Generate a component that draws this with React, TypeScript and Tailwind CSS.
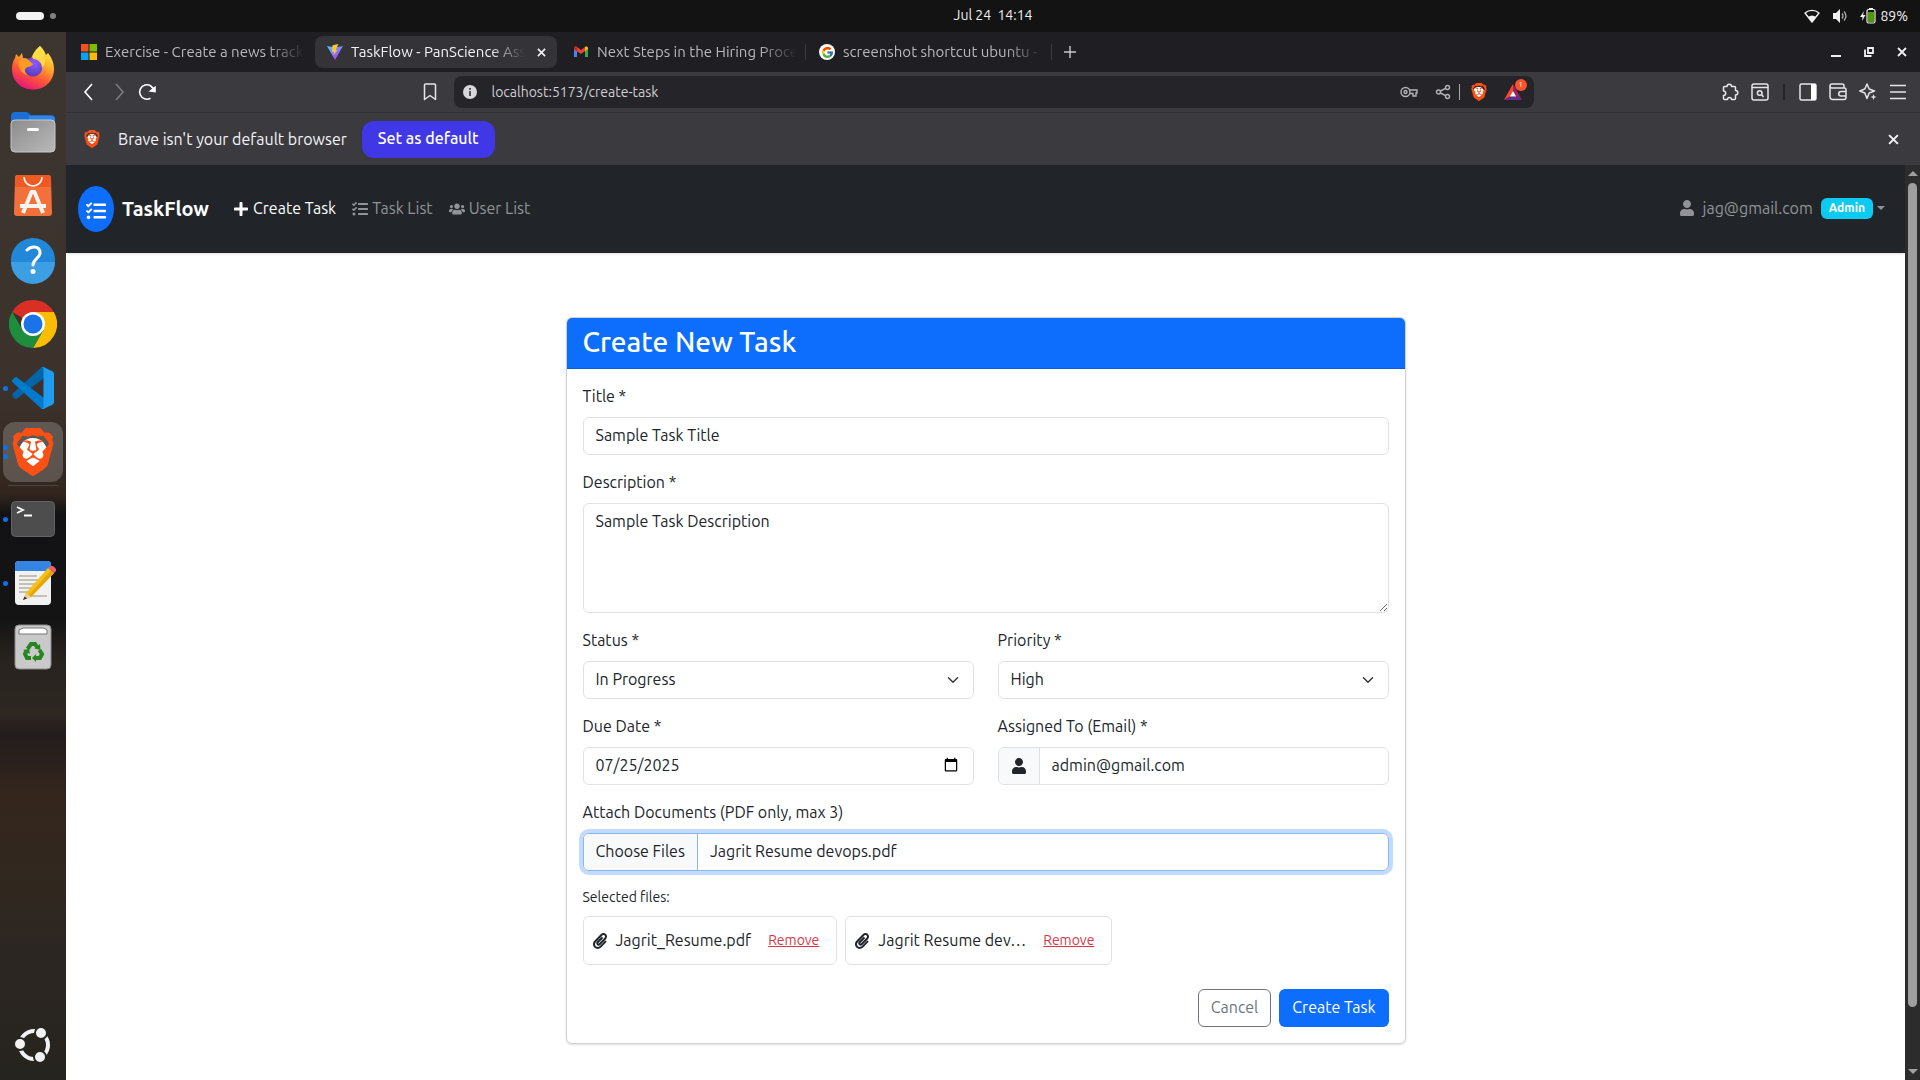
import React from "react";
import { FaPaperclip, FaPlus, FaTasks, FaUser, FaUsers } from "react-icons/fa";
import { FcGoogle } from "react-icons/fc";
import { SiBrave } from "react-icons/si";

/* ---------- Dock icons ---------- */

function FirefoxIcon() {
  return (
    <svg viewBox="0 0 48 48" className="size-12">
      <defs>
        <linearGradient id="fx-body" x1="0.8" y1="0" x2="0.3" y2="1">
          <stop offset="0" stopColor="#fff44f" />
          <stop offset="0.35" stopColor="#ffb22e" />
          <stop offset="0.65" stopColor="#ff5a34" />
          <stop offset="1" stopColor="#e8127c" />
        </linearGradient>
        <radialGradient id="fx-globe" cx="0.6" cy="0.3" r="0.8">
          <stop offset="0" stopColor="#9059ff" />
          <stop offset="1" stopColor="#4a3bb5" />
        </radialGradient>
      </defs>
      <path
        d="M31 2c3 3 5 6 6 9l2-2c4 5 6 10 6 16 0 12-9 20.500-21 20.500S3 37 3 25c0-5 1-8 3-11l1-4 3 3 3-4 1 5c4 0 6 1 8 2 0-4 5-10 9-14z"
        fill="url(#fx-body)"
      />
      <circle cx="24" cy="23" r="9.500" fill="url(#fx-globe)" />
      <path d="M9 18c4-3 9-3 12-1 1 2 3 2 3 3-1 3-5 2-7 4-2 2-1 5 2 7-7-1-9-7-10-13z" fill="#ff9a22" />
      <path d="M31 2c-5 4-8 8-7 13 5 0 9 4 9 9 3-3 4-7 2-12 1-4-1-7-4-10z" fill="#ffe14a" opacity="0.85" />
    </svg>
  );
}

function FilesIcon() {
  return (
    <svg viewBox="0 0 48 48" className="size-12">
      <defs>
        <linearGradient id="files" x1="0" y1="0" x2="1" y2="1">
          <stop offset="0" stopColor="#8c8c8c" />
          <stop offset="1" stopColor="#b9b9b9" />
        </linearGradient>
      </defs>
      <path d="M2 8a4 4 0 0 1 4-4h12l4 3h20a4 4 0 0 1 4 4v14H2z" fill="#1a6fd4" />
      <path d="M20 8h22a4 4 0 0 1 4 4v8H20z" fill="#3086e8" />
      <rect x="2" y="12" width="44" height="32" rx="4" fill="url(#files)" stroke="#c8c8c8" />
      <rect x="18" y="20" width="12" height="3" rx="1.500" fill="#fff" />
    </svg>
  );
}

function AppCenterIcon() {
  return (
    <svg viewBox="0 0 48 48" className="size-12">
      <path d="M9 3h30a3 3 0 0 1 3 3l1 35a3 3 0 0 1-3 3H8a3 3 0 0 1-3-3L6 6a3 3 0 0 1 3-3z" fill="#f4703a" />
      <path d="M9 3h30a3 3 0 0 1 3 3v9H6V6a3 3 0 0 1 3-3z" fill="#ee5a22" />
      <path d="M15 5c0 5 4 9 9 9s9-4 9-9" fill="none" stroke="#fff" strokeWidth="1.600" />
      <path d="M14 41 22.500 20h3L34 41M11 34h26" fill="none" stroke="#fff3ee" strokeWidth="4" strokeLinejoin="round" />
    </svg>
  );
}

function HelpIcon() {
  return (
    <svg viewBox="0 0 48 48" className="size-12">
      <circle cx="24" cy="24" r="22" fill="#2187d8" />
      <path d="M2 26a22 22 0 0 0 44 0z" fill="#3d9fe3" />
      <path
        d="M18 14c2-2 4-3 7-3 4 0 6 2.500 6 6 0 5-7 6-7 12"
        fill="none"
        stroke="#fff"
        strokeWidth="3"
        strokeLinecap="round"
      />
      <circle cx="24" cy="35.500" r="2.500" fill="#fff" />
    </svg>
  );
}

function ChromeIcon() {
  return (
    <svg viewBox="0 0 48 48" className="size-12">
      <path d="M24 24 3.200 12A24 24 0 0 1 44.800 12z" fill="#d93025" />
      <path d="M24 12h20.800A24 24 0 0 1 24 48l10.400-18z" fill="#fbbc04" />
      <path d="M13.600 30 3.200 12A24 24 0 0 0 24 48l10.400-18z" fill="#1e8e3e" />
      <circle cx="24" cy="24" r="12" fill="#fff" />
      <circle cx="24" cy="24" r="9.500" fill="#1a73e8" />
    </svg>
  );
}

function VsCodeIcon() {
  return (
    <svg viewBox="0 0 100 100" className="size-[42px]">
      <path
        fill="#0065A9"
        d="M96.461 10.796 75.857.876a6.230 6.230 0 0 0-7.107 1.207L1.299 63.583a4.167 4.167 0 0 0 .004 6.162l5.510 5.009a4.167 4.167 0 0 0 5.321.236l81.227-61.620c2.725-2.067 6.639-.124 6.639 3.297v-.240a6.250 6.250 0 0 0-3.539-5.631z"
      />
      <path
        fill="#007ACC"
        d="m96.461 89.204-20.604 9.920a6.230 6.230 0 0 1-7.107-1.207l-67.451-61.500a4.167 4.167 0 0 1 .004-6.162l5.510-5.009a4.167 4.167 0 0 1 5.321-.236l81.227 61.620c2.725 2.067 6.639.124 6.639-3.297v.240a6.250 6.250 0 0 1-3.539 5.631z"
      />
      <path
        fill="#1F9CF0"
        d="M75.858 99.126a6.230 6.230 0 0 1-7.108-1.210c2.306 2.307 6.250.674 6.250-2.588V4.672c0-3.262-3.944-4.895-6.250-2.589a6.230 6.230 0 0 1 7.108-1.210l20.600 9.908A6.250 6.250 0 0 1 100 16.413v67.174a6.250 6.250 0 0 1-3.541 5.633z"
      />
    </svg>
  );
}

function BraveShield({ className }: { className: string }) {
  return (
    <span className={`relative inline-flex items-center justify-center ${className}`}>
      <span className="absolute inset-[20%] rounded-full bg-white" />
      <SiBrave className="relative size-full text-[#fb5014]" />
    </span>
  );
}

function TerminalIcon() {
  return (
    <svg viewBox="0 0 48 48" className="size-12">
      <rect x="2.500" y="6.500" width="43" height="35" rx="4" fill="#4d4d4d" stroke="#636363" />
      <path d="m8 12 6 3-6 3M15 20.500h8" fill="none" stroke="#fff" strokeWidth="1.800" />
    </svg>
  );
}

function EditorIcon() {
  return (
    <svg viewBox="0 0 48 48" className="size-12">
      <rect x="6" y="2" width="36" height="44" rx="4" fill="#f1f1f1" />
      <path d="M10 2h28a4 4 0 0 1 4 4v6H6V6a4 4 0 0 1 4-4z" fill="#3584e4" />
      <path d="M10 17h18M10 21h22M10 25h16M10 29h14M10 33h10M20 37h18" stroke="#c5c0b5" strokeWidth="1.800" />
      <path d="m17 34 22-25 6 5-23 24-8 3z" fill="#f5c211" />
      <path d="m20 36 22-24.500 3 2.500-23 24z" fill="#e5a50a" />
      <path d="m17 34 5 4-8 3z" fill="#e8c9a0" />
      <path d="m15.500 37.500 2.500 2-4 1.500z" fill="#333" />
      <path d="m39 9 2-2c2-1.500 7 2 6 5l-2 2z" fill="#ed5f6a" />
    </svg>
  );
}

function TrashIcon() {
  return (
    <svg viewBox="0 0 48 48" className="size-12">
      <rect x="6" y="2" width="36" height="44" rx="4" fill="#c9c9c9" stroke="#8a8a8a" />
      <path d="M10 11V7l4-2h21l3 2v4z" fill="#fff" stroke="#777" />
      <g fill="none" stroke="#26851f" strokeWidth="4">
        <path d="m18.500 26 3.500-5h4l2 3" />
        <path d="m30.500 27 2.500 4-2 4h-4" />
        <path d="M22 35h-4l-2-4 1.500-3" />
      </g>
      <path d="m31 21 .500 6-6-1.500zM27 31v8l-4-4zM14 27l6-1 1 5z" fill="#26851f" />
    </svg>
  );
}

function UbuntuIcon() {
  return (
    <svg viewBox="0 0 40 40" className="size-10">
      <circle cx="21" cy="21" r="14" fill="none" stroke="#f2f2f2" strokeWidth="4" />
      <g fill="#f2f2f2" stroke="#282620" strokeWidth="2">
        <circle cx="7" cy="20" r="6" />
        <circle cx="28" cy="9" r="6" />
        <circle cx="27" cy="33" r="6" />
      </g>
    </svg>
  );
}

type DockItem = { name: string; icon: React.ReactNode; dots: number; active?: boolean };

const pinned: DockItem[] = [
  { name: "Firefox", icon: <FirefoxIcon />, dots: 0 },
  { name: "Files", icon: <FilesIcon />, dots: 0 },
  { name: "App Center", icon: <AppCenterIcon />, dots: 0 },
  { name: "Help", icon: <HelpIcon />, dots: 0 },
  { name: "Chrome", icon: <ChromeIcon />, dots: 0 },
  { name: "VS Code", icon: <VsCodeIcon />, dots: 1 },
  { name: "Brave", icon: <BraveShield className="size-12" />, dots: 2, active: true },
];

const running: DockItem[] = [
  { name: "Terminal", icon: <TerminalIcon />, dots: 1 },
  { name: "Text Editor", icon: <EditorIcon />, dots: 1 },
  { name: "Trash", icon: <TrashIcon />, dots: 0 },
];

function DockButton({ item }: { item: DockItem }) {
  return (
    <button
      type="button"
      aria-label={item.name}
      className="relative flex h-16 w-full items-center justify-center"
    >
      {item.active && <span className="absolute inset-x-[3px] inset-y-[2px] rounded-xl bg-white/20" />}
      <span className="absolute left-[3px] flex flex-col gap-1">
        {Array.from({ length: item.dots }, (_, i) => (
          <span key={i} className="size-[5px] rounded-full bg-[#0a73ea]" />
        ))}
      </span>
      <span className="relative flex">{item.icon}</span>
    </button>
  );
}

function Dock() {
  return (
    <nav
      aria-label="Dock"
      className="flex w-[66px] shrink-0 flex-col bg-[linear-gradient(to_bottom,#3c3530_0%,#3c322b_35%,#33261f_44%,#121214_46%,#141415_56%,#28231f_60%,#2e2722_65%,#231d1b_67%,#34261d_73%,#30281f_82%,#2c2623_88%,#26241e_100%)] pt-1 pb-2"
    >
      {pinned.map((item) => (
        <DockButton key={item.name} item={item} />
      ))}
      <div className="mx-2 my-px h-px bg-[#4b4643]" />
      {running.map((item) => (
        <DockButton key={item.name} item={item} />
      ))}
      <button type="button" aria-label="Show applications" className="mt-auto flex h-14 items-center justify-center">
        <UbuntuIcon />
      </button>
    </nav>
  );
}

/* ---------- System bar ---------- */

function SystemBar() {
  return (
    <header className="grid h-8 grid-cols-[62px_1fr_auto_1fr] items-center bg-[#131313] pr-3 pl-4 text-sm text-[#f0f0f0]">
      <button type="button" aria-label="Workspaces" className="flex items-center gap-1.5">
        <span className="h-2 w-7 rounded-full bg-[#f2f2f2]" />
        <span className="size-1.5 rounded-full bg-[#808080]" />
      </button>
      <span />
      <time className="pb-0.5 whitespace-pre">Jul 24  14:14</time>
      <div className="flex items-center justify-end">
        <svg viewBox="0 0 16 16" className="mr-3 size-4">
          <path d="M1 5c4-3.500 10-3.500 14 0l-7 9z" fill="none" stroke="#f0f0f0" strokeWidth="1.400" strokeLinejoin="round" />
          <path d="M4 9c2.500-2 5.500-2 8 0l-4 5.500z" fill="#f0f0f0" />
        </svg>
        <svg viewBox="0 0 16 16" className="mr-3 size-4">
          <path d="M1 5h3l4-4v14l-4-4H1z" fill="#f0f0f0" />
          <path d="M10 5.500q2 2.500 0 5M12 3.500q4 4.500 0 9" fill="none" stroke="#b0b0b0" strokeWidth="1.300" />
        </svg>
        <svg viewBox="0 0 16 16" className="mr-1 size-4">
          <path d="M4 3 0 9h2.500L2 13l3.500-6H3z" fill="#f0f0f0" />
          <rect x="7" y="1.500" width="8" height="13.500" rx="1.500" fill="none" stroke="#f0f0f0" strokeWidth="1.200" />
          <path d="M9 0h4v1.500H9z" fill="#f0f0f0" />
          <rect x="8" y="4" width="6" height="10" fill="#4e9a06" />
        </svg>
        <span>89%</span>
      </div>
    </header>
  );
}

/* ---------- Browser chrome ---------- */

function MicrosoftMark() {
  return (
    <svg viewBox="0 0 16 16" className="size-4 shrink-0">
      <path d="M0 0h7.500v7.500H0z" fill="#f25022" />
      <path d="M8.500 0H16v7.500H8.500z" fill="#7fba00" />
      <path d="M0 8.500h7.500V16H0z" fill="#00a4ef" />
      <path d="M8.500 8.500H16V16H8.500z" fill="#ffb900" />
    </svg>
  );
}

function ViteMark() {
  return (
    <svg viewBox="0 0 16 16" className="size-4 shrink-0">
      <defs>
        <linearGradient id="vite" x1="0" y1="0" x2="0.600" y2="1">
          <stop offset="0" stopColor="#41d1ff" />
          <stop offset="1" stopColor="#bd34fe" />
        </linearGradient>
      </defs>
      <path d="M0 2 8 16 16 2 8 3.500z" fill="url(#vite)" />
      <path d="M11.500 0 5.500 1.200 5 8l2-.400L6.500 11l4-5-2 .300z" fill="#ffc928" />
    </svg>
  );
}

function GmailMark() {
  return (
    <svg viewBox="0 0 16 12" className="w-4 shrink-0">
      <path d="M1 1.500V11h3V4z" fill="#4285f4" />
      <path d="M15 1.500V11h-3V4z" fill="#34a853" />
      <path d="M1 2.500C1 .500 3 0 4 1l4 3 4-3v4L8 8 1 3.500z" fill="#ea4335" />
      <path d="M12 1c1-1 3-.500 3 1.500V3l-3 2.200z" fill="#fbbc04" />
      <path d="M1 2.500C1 .500 3 0 4 1v4.200L1 3z" fill="#c5221f" />
    </svg>
  );
}

function CloseMark({ className }: { className: string }) {
  return (
    <svg viewBox="0 0 10 10" className={className}>
      <path d="m1 1 8 8M9 1 1 9" stroke="currentColor" strokeWidth="1.800" />
    </svg>
  );
}

function Tab({ icon, title, active }: { icon: React.ReactNode; title: string; active?: boolean }) {
  return (
    <div
      className={`flex h-8 w-[242px] items-center rounded-lg pl-3 ${active ? "bg-[#343338] pr-[11px] text-[#f3f3f5]" : "pr-0.5 text-[#b9b8bc]"}`}
    >
      {icon}
      <button
        type="button"
        className={`ml-2 min-w-0 flex-1 overflow-hidden text-left text-[15px] whitespace-nowrap ${active ? "[mask-image:linear-gradient(to_right,#000_80%,transparent)]" : "[mask-image:linear-gradient(to_right,#000_80%,transparent_98%)]"}`}
      >
        {title}
      </button>
      {active && (
        <button type="button" aria-label="Close tab" className="ml-3 flex">
          <CloseMark className="size-[9px]" />
        </button>
      )}
    </div>
  );
}

function TabStrip() {
  return (
    <div className="flex h-10 items-center bg-[#1f1e23] pr-[13px] pl-[3px] text-[#f0f0f2]">
      <Tab icon={<MicrosoftMark />} title="Exercise - Create a news track" />
      <span className="w-1" />
      <Tab icon={<ViteMark />} title="TaskFlow - PanScience Ass" active />
      <span className="w-1" />
      <Tab icon={<GmailMark />} title="Next Steps in the Hiring Proce" />
      <span className="mr-px ml-[2px] h-4 w-px bg-[#3d3c41]" />
      <Tab
        icon={
          <span className="flex size-4 items-center justify-center rounded-full bg-white">
            <FcGoogle className="size-[13px]" />
          </span>
        }
        title="screenshot shortcut ubuntu -"
      />
      <span className="mx-[2px] h-4 w-px bg-[#3d3c41]" />
      <button type="button" aria-label="New tab" className="ml-2.5 flex text-[#c9c9cb]">
        <svg viewBox="0 0 12 12" className="size-3">
          <path d="M6 0v12M0 6h12" stroke="currentColor" strokeWidth="1.400" />
        </svg>
      </button>
      <div className="ml-auto flex items-center gap-[23px]">
        <button type="button" aria-label="Minimize" className="flex">
          <svg viewBox="0 0 10 10" className="size-[10px]">
            <path d="M0 8h10v2H0z" fill="currentColor" />
          </svg>
        </button>
        <button type="button" aria-label="Restore" className="flex">
          <svg viewBox="0 0 10 10" className="size-[10px]">
            <path d="M4 1h5v5H4zM1 2.500V9h6.500" fill="none" stroke="currentColor" strokeWidth="1.800" />
          </svg>
        </button>
        <button type="button" aria-label="Close window" className="flex">
          <CloseMark className="size-[10px]" />
        </button>
      </div>
    </div>
  );
}

function Toolbar() {
  return (
    <div className="flex h-10 items-center bg-[#3b3a3f] pr-[13px] pl-4 text-[#e6e5e9]">
      <div className="flex items-center gap-[10px]">
        <button type="button" aria-label="Back">
          <svg viewBox="0 0 18 18" className="size-[18px]" fill="none" stroke="#fff" strokeWidth="1.600">
            <path d="m10 1-7 8 7 8" />
          </svg>
        </button>
        <button type="button" aria-label="Forward">
          <svg viewBox="0 0 18 18" className="size-[18px]" fill="none" stroke="#7d7c80" strokeWidth="1.600">
            <path d="m6 1 7 8-7 8" />
          </svg>
        </button>
        <button type="button" aria-label="Reload">
          <svg viewBox="0 0 18 18" className="size-[18px]" fill="none" stroke="#fff" strokeWidth="1.600">
            <path d="M12.500 15.200A7.200 7.200 0 1 1 16 8" />
            <path d="m12.500 8 4.500.500V4.500z" fill="#fff" />
          </svg>
        </button>
      </div>
      <div className="flex flex-1 items-center justify-center pl-[76px]">
        <button type="button" aria-label="Bookmark" className="ml-auto flex w-8 justify-center">
          <svg viewBox="0 0 14 18" className="h-[18px]" fill="none" stroke="currentColor" strokeWidth="1.500">
            <path d="M1.500 2a1 1 0 0 1 1-1h9a1 1 0 0 1 1 1v14.500L7 12.500l-5.500 4z" strokeLinejoin="round" />
          </svg>
        </button>
      </div>
      <div className="ml-2 flex h-8 w-full max-w-[1080px] items-center rounded-lg bg-[#252429] px-2">
        <svg viewBox="0 0 16 16" className="size-4">
          <circle cx="8" cy="8" r="7" fill="#d8d7dc" />
          <path d="M7.200 7h1.600v5H7.200zM7.200 4h1.600v1.700H7.200z" fill="#333" />
        </svg>
        <input
          aria-label="Address"
          defaultValue="localhost:5173/create-task"
          className="ml-[14px] min-w-0 flex-1 bg-transparent text-sm text-[#cfced3] outline-none"
        />
        <svg viewBox="0 0 18 14" className="w-[18px]" fill="none" stroke="#b5b4b8" strokeWidth="1.400">
          <circle cx="5.500" cy="7" r="4.500" />
          <circle cx="5.500" cy="7" r="1.500" />
          <path d="M9.800 5H17v3h-1v3h-3V8.500H9.800" />
        </svg>
        <svg viewBox="0 0 16 16" className="ml-[17px] size-4" fill="none" stroke="#b5b4b8" strokeWidth="1.400">
          <circle cx="3.500" cy="8" r="2" />
          <circle cx="12.500" cy="3.500" r="2" />
          <circle cx="12.500" cy="12.500" r="2" />
          <path d="m5.300 7 5.400-2.700M5.300 9l5.400 2.700" />
        </svg>
        <span className="ml-2 h-4 w-px bg-[#a9a8ac]" />
        <BraveShield className="ml-[10px] size-[18px]" />
        <span className="relative ml-4 flex">
          <svg viewBox="0 0 18 16" className="w-[18px]">
            <path d="M9 0 0 16l6-3.500L9 7z" fill="#ff4724" />
            <path d="m9 0 9 16-6-3.500L9 7z" fill="#9e1f63" />
            <path d="M0 16h18l-6-3.500H6z" fill="#662d91" />
            <path d="m9 7 3.200 5.500H5.800z" fill="#fff" />
          </svg>
          <span className="absolute -top-[5px] left-[11px] flex size-3 items-center justify-center rounded-full bg-[#fb542b] text-[8px] text-white">
            1
          </span>
        </span>
        <span className="w-1" />
      </div>
      <div className="flex flex-1 items-center justify-end gap-3 pl-[160px]">
        <svg viewBox="0 0 18 18" className="size-[18px] shrink-0" fill="none" stroke="currentColor" strokeWidth="1.500">
          <path
            d="M2.500 4.500a1 1 0 0 1 1-1H6a2.300 2.300 0 0 1 4.600 0h2.900a1 1 0 0 1 1 1v2.900a2.300 2.300 0 0 1 0 4.600v3.500a1 1 0 0 1-1 1h-3a2 2 0 0 0-4 0h-3a1 1 0 0 1-1-1v-3a2.200 2.200 0 0 0 0-4.400z"
            strokeLinejoin="round"
          />
        </svg>
        <svg viewBox="0 0 18 18" className="size-[18px] shrink-0" fill="none" stroke="currentColor" strokeWidth="1.500">
          <rect x="1" y="1" width="16" height="16" rx="2" />
          <path d="M1 4.500h16" />
          <circle cx="8.700" cy="10" r="2.300" />
          <path d="m10.500 11.500 2 2.500" />
        </svg>
        <span className="mx-[2px] h-4 w-[2px] shrink-0 bg-[#252429]" />
        <svg viewBox="0 0 18 18" className="size-[18px] shrink-0">
          <rect x="1" y="1" width="16" height="16" rx="1.500" fill="none" stroke="currentColor" strokeWidth="1.500" />
          <path d="M12 1h5v16h-5z" fill="#fff" />
        </svg>
        <svg viewBox="0 0 18 18" className="size-[18px] shrink-0" fill="none" stroke="currentColor" strokeWidth="1.500">
          <path d="M15 5V3a2 2 0 0 0-2-2H3a2 2 0 0 0-2 2v11a2.500 2.500 0 0 0 2.500 2.500H15a2 2 0 0 0 2-2V6.500A1.500 1.500 0 0 0 15.500 5H3a2 2 0 0 1-2-2" />
          <path d="M17 8.500h-5a2.300 2.300 0 0 0 0 4.600h5" />
        </svg>
        <svg viewBox="0 0 18 18" className="size-[18px] shrink-0" fill="none" stroke="currentColor" strokeWidth="1.500">
          <path d="m8 1 2.200 5L15.500 8l-5.300 2L8 15.500 5.800 10 .800 8l5-2z" strokeLinejoin="round" />
          <path d="m14.500 11 .800 2.200 2.200.800-2.200.800-.800 2.200-.800-2.200-2.200-.800 2.200-.800z" fill="currentColor" stroke="none" />
        </svg>
        <button type="button" aria-label="Menu" className="shrink-0">
          <svg viewBox="0 0 18 18" className="size-[18px]">
            <path d="M1 2.500h16M1 9h16M1 15.500h16" stroke="currentColor" strokeWidth="1.600" />
          </svg>
        </button>
      </div>
    </div>
  );
}

function DefaultBrowserBar() {
  return (
    <div className="flex h-[53px] items-center border-t border-[#323136] bg-[#3b3a3f] pr-[21px] pl-[17px] text-base text-[#f3f3f5]">
      <BraveShield className="size-[18px]" />
      <span className="ml-[17px]">Brave isn't your default browser</span>
      <button type="button" className="ml-[15px] h-[37px] rounded-xl bg-[#4038e6] px-4 pb-0.5 font-medium text-white">
        Set as default
      </button>
      <button type="button" aria-label="Dismiss" className="ml-auto flex">
        <CloseMark className="size-[11px]" />
      </button>
    </div>
  );
}

/* ---------- TaskFlow page ---------- */

function SiteNav() {
  const link = "flex items-center gap-1 text-base";
  return (
    <nav className="flex h-[88px] shrink-0 items-center bg-[#212529] pr-5 pl-3 shadow-sm">
      <a href="#home" className="flex items-center gap-2 text-xl font-bold text-white">
        <span className="flex h-[46px] w-9 items-center justify-center rounded-[50%] bg-[#0d6efd]">
          <FaTasks className="mt-1 size-5" />
        </span>
        TaskFlow
      </a>
      <div className="ml-6 flex items-center gap-4 text-[#919396]">
        <a href="#create" className={`${link} text-white`}>
          <FaPlus className="size-4" /> <span className="pb-0.5">Create Task</span>
        </a>
        <a href="#tasks" className={link}>
          <FaTasks className="size-4" /> <span className="pb-0.5">Task List</span>
        </a>
        <a href="#users" className={link}>
          <FaUsers className="size-4" /> <span className="pb-0.5">User List</span>
        </a>
      </div>
      <button type="button" className="ml-auto flex items-center pb-0.5 text-base text-[#919396]">
        <FaUser className="mr-2 size-4" />
        jag@gmail.com
        <span className="ml-2 flex h-[21px] items-center rounded-md bg-[#0dcaf0] px-2 text-xs font-bold text-white">
          Admin
        </span>
        <span className="ml-1 border-x-4 border-t-4 border-x-transparent border-t-[#919396]" />
      </button>
    </nav>
  );
}

const control =
  "h-[38px] w-full rounded-md border border-[#dee2e6] bg-white px-3 pb-0.5 text-base leading-6 text-[#212529] outline-none";

const dateParts =
  "[&::-webkit-datetime-edit]:p-0 [&::-webkit-datetime-edit-month-field]:p-0 [&::-webkit-datetime-edit-day-field]:p-0 [&::-webkit-datetime-edit-year-field]:p-0";

function Field({ id, label, children }: { id: string; label: string; children: React.ReactNode }) {
  return (
    <div className="flex min-w-0 flex-col gap-2">
      <label htmlFor={id} className="pb-0.5 text-base leading-[22px]">
        {label}
      </label>
      {children}
    </div>
  );
}

function Select({ id, options, value }: { id: string; options: string[]; value: string }) {
  return (
    <div className="relative">
      <select id={id} defaultValue={value} className={`${control} appearance-none pr-9`}>
        {options.map((option) => (
          <option key={option}>{option}</option>
        ))}
      </select>
      <svg
        viewBox="0 0 16 16"
        className="pointer-events-none absolute top-[13px] right-[15px] size-3"
        fill="none"
        stroke="#343a40"
        strokeWidth="2"
        strokeLinecap="round"
        strokeLinejoin="round"
      >
        <path d="m2 5 6 6 6-6" />
      </svg>
    </div>
  );
}

function FileChip({ name }: { name: string }) {
  return (
    <li className="flex h-[49px] items-center rounded-md border border-[#dee2e6] pl-2 text-base">
      <FaPaperclip className="mr-2 size-4" />
      <span className="pb-0.5 whitespace-nowrap">{name}</span>
      <button type="button" className="px-[17px] pb-0.5 text-sm text-[#dc3545] underline">
        Remove
      </button>
    </li>
  );
}

function TaskForm() {
  return (
    <form
      onSubmit={(e) => e.preventDefault()}
      className="w-full max-w-[840px] rounded-md border border-[#d0d1d3] bg-white text-[#212529] shadow-sm"
    >
      <h1 className="rounded-t-[5px] border-b border-[#0b5ed7] bg-[#0d6efd] px-4 pt-[7px] pb-[9px] text-[28px] leading-[34px] font-medium text-white">
        Create New Task
      </h1>
      <div className="flex flex-col gap-4 p-4">
        <Field id="title" label="Title *">
          <input id="title" defaultValue="Sample Task Title" className={control} />
        </Field>
        <Field id="description" label="Description *">
          <textarea
            id="description"
            defaultValue="Sample Task Description"
            className="h-[110px] w-full resize-y rounded-md border border-[#dee2e6] px-3 py-[5px] text-base leading-6 outline-none"
          />
        </Field>
        <div className="grid grid-cols-2 gap-x-6 gap-y-4">
          <Field id="status" label="Status *">
            <Select id="status" options={["Pending", "In Progress", "Completed"]} value="In Progress" />
          </Field>
          <Field id="priority" label="Priority *">
            <Select id="priority" options={["Low", "Medium", "High"]} value="High" />
          </Field>
          <Field id="due" label="Due Date *">
            <input id="due" type="date" defaultValue="2025-07-25" className={`${control} ${dateParts}`} />
          </Field>
          <Field id="assignee" label="Assigned To (Email) *">
            <div className="flex h-[38px] overflow-hidden rounded-md border border-[#dee2e6]">
              <span className="flex w-[41px] items-center justify-center border-r border-[#dee2e6] bg-[#f8f9fa]">
                <FaUser className="size-4" />
              </span>
              <input
                id="assignee"
                type="email"
                defaultValue="admin@gmail.com"
                className="min-w-0 flex-1 px-3 pb-0.5 text-base outline-none"
              />
            </div>
          </Field>
        </div>
        <Field id="documents" label="Attach Documents (PDF only, max 3)">
          <label
            htmlFor="documents"
            className="relative flex h-[38px] overflow-hidden rounded-md border border-[#86b7fe] text-base ring-4 ring-[#c2dbfe]"
          >
            <input id="documents" type="file" accept="application/pdf" multiple className="sr-only" />
            <span className="flex items-center border-r border-[#86b7fe] bg-[#f8f9fa] px-3 pb-0.5">Choose Files</span>
            <span className="flex items-center px-3 pb-0.5">Jagrit Resume devops.pdf</span>
          </label>
        </Field>
        <div>
          <p className="text-sm leading-[21px]">Selected files:</p>
          <ul className="mt-2 flex flex-wrap gap-2">
            <FileChip name="Jagrit_Resume.pdf" />
            <FileChip name="Jagrit Resume dev…" />
          </ul>
        </div>
        <div className="mt-2 flex justify-end gap-2 text-base">
          <button type="button" className="h-[38px] rounded-md border border-[#6c757d] px-3 pb-0.5 text-[#6c757d]">
            Cancel
          </button>
          <button type="submit" className="h-[38px] rounded-md bg-[#0d6efd] px-[13px] pb-0.5 text-white">
            Create Task
          </button>
        </div>
      </div>
    </form>
  );
}

function Scrollbar() {
  return (
    <div className="flex w-[15px] shrink-0 flex-col items-center bg-[#2c2c2c] py-[6px]">
      <span className="border-x-[5px] border-b-[5px] border-x-transparent border-b-[#a0a0a0]" />
      <span className="mt-[7px] w-[9px] flex-[823] rounded-full bg-[#9f9f9f]" />
      <span className="flex-[62]" />
      <span className="border-x-[5px] border-t-[5px] border-x-transparent border-t-[#a0a0a0]" />
    </div>
  );
}

export default function App() {
  return (
    <div className="flex min-h-screen flex-col bg-[#131313] font-['Ubuntu','Noto_Sans',sans-serif]">
      <SystemBar />
      <div className="flex flex-1">
        <Dock />
        <div className="flex min-w-0 flex-1 flex-col">
          <TabStrip />
          <Toolbar />
          <DefaultBrowserBar />
          <div className="flex flex-1">
            <div className="flex min-w-0 flex-1 flex-col bg-white">
              <SiteNav />
              <main className="flex justify-center px-4 pt-16 pb-6">
                <TaskForm />
              </main>
            </div>
            <Scrollbar />
          </div>
        </div>
      </div>
    </div>
  );
}
